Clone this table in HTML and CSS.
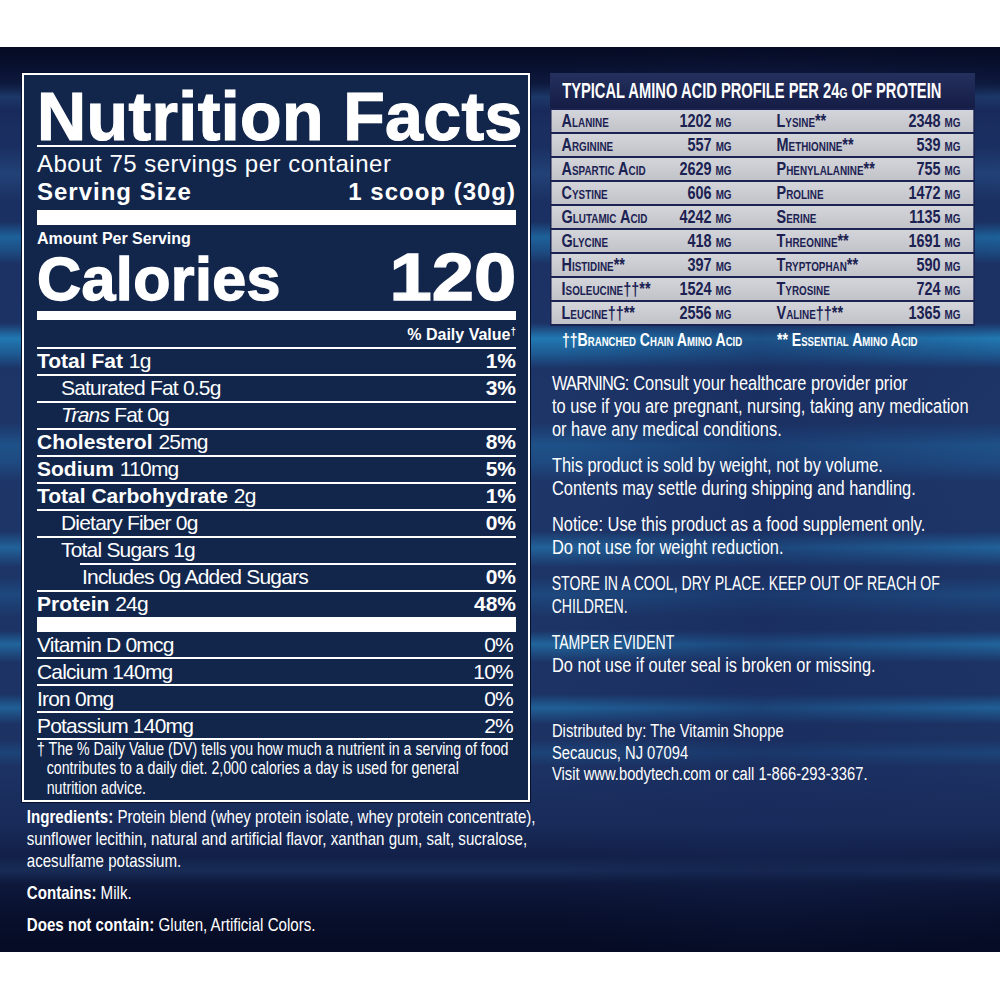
FILE: index.html
```html
<!DOCTYPE html>
<html lang="en">
<head>
<meta charset="utf-8">
<title>Nutrition Facts</title>
<link rel="stylesheet" href="styles.css">
</head>
<body>
<div class="panel">
  <div class="left">
    <div class="nf">
      <h1 class="nf-title">Nutrition Facts</h1>
      <div class="servings">About 75 servings per container</div>
      <div class="serving-size"><span>Serving Size</span><span>1 scoop (30g)</span></div>
      <div class="bar-thick"></div>
      <div class="amount">Amount Per Serving</div>
      <div class="calories"><span class="cal-label">Calories</span><span class="cal-num">120</span></div>
      <div class="bar-med"></div>
      <div class="dv-head">% Daily Value<span class="dag">†</span></div>
      <div class="row"><span><b>Total Fat</b> <span class="reg">1g</span></span><b>1%</b></div>
      <div class="row ind1"><span class="reg">Saturated Fat 0.5g</span><b>3%</b></div>
      <div class="row ind1"><span class="reg"><i>Trans</i> Fat 0g</span></div>
      <div class="row"><span><b>Cholesterol</b> <span class="reg">25mg</span></span><b>8%</b></div>
      <div class="row"><span><b>Sodium</b> <span class="reg">110mg</span></span><b>5%</b></div>
      <div class="row"><span><b>Total Carbohydrate</b> <span class="reg">2g</span></span><b>1%</b></div>
      <div class="row ind1"><span class="reg">Dietary Fiber 0g</span><b>0%</b></div>
      <div class="row ind1"><span class="reg">Total Sugars 1g</span></div>
      <div class="row ind2"><span class="reg">Includes 0g Added Sugars</span><b>0%</b></div>
      <div class="row"><span><b>Protein</b> <span class="reg">24g</span></span><b>48%</b></div>
      <div class="bar-thick"></div>
      <div class="vit">
        <div class="vrow"><span>Vitamin D 0mcg</span><span>0%</span></div>
        <div class="vrow"><span>Calcium 140mg</span><span>10%</span></div>
        <div class="vrow"><span>Iron 0mg</span><span>0%</span></div>
        <div class="vrow"><span>Potassium 140mg</span><span>2%</span></div>
      </div>
      <p class="foot sq">† The % Daily Value (DV) tells you how much a nutrient in a serving of food<br>contributes to a daily diet. 2,000 calories a day is used for general<br>nutrition advice.</p>
    </div>
    <div class="ingredients sq">
      <p><b>Ingredients:</b> Protein blend (whey protein isolate, whey protein concentrate),<br>sunflower lecithin, natural and artificial flavor, xanthan gum, salt, sucralose,<br>acesulfame potassium.</p>
      <p><b>Contains:</b> Milk.</p>
      <p><b>Does not contain:</b> Gluten, Artificial Colors.</p>
    </div>
  </div>

  <div class="right">
    <div class="amino sq">
      <div class="amino-head"><span class="head-text">TYPICAL AMINO ACID PROFILE PER 24<span class="sc">g</span> OF PROTEIN</span></div>
      <div class="amino-rows">
        <div class="arow"><span>Alanine</span><span class="v">1202 mg</span><span></span><span>Lysine**</span><span class="v">2348 mg</span></div>
        <div class="arow"><span>Arginine</span><span class="v">557 mg</span><span></span><span>Methionine**</span><span class="v">539 mg</span></div>
        <div class="arow"><span>Aspartic Acid</span><span class="v">2629 mg</span><span></span><span>Phenylalanine**</span><span class="v">755 mg</span></div>
        <div class="arow"><span>Cystine</span><span class="v">606 mg</span><span></span><span>Proline</span><span class="v">1472 mg</span></div>
        <div class="arow"><span>Glutamic Acid</span><span class="v">4242 mg</span><span></span><span>Serine</span><span class="v">1135 mg</span></div>
        <div class="arow"><span>Glycine</span><span class="v">418 mg</span><span></span><span>Threonine**</span><span class="v">1691 mg</span></div>
        <div class="arow"><span>Histidine**</span><span class="v">397 mg</span><span></span><span>Tryptophan**</span><span class="v">590 mg</span></div>
        <div class="arow"><span>Isoleucine††**</span><span class="v">1524 mg</span><span></span><span>Tyrosine</span><span class="v">724 mg</span></div>
        <div class="arow"><span>Leucine††**</span><span class="v">2556 mg</span><span></span><span>Valine††**</span><span class="v">1365 mg</span></div>
      </div>
    </div>
    <div class="legend sq"><span>††Branched Chain Amino Acid</span><span>** Essential Amino Acid</span></div>

    <div class="notes sq">
      <p><span class="warn">WARNING:</span> Consult your healthcare provider prior<br>to use if you are pregnant, nursing, taking any medication<br>or have any medical conditions.</p>
      <p>This product is sold by weight, not by volume.<br>Contents may settle during shipping and handling.</p>
      <p>Notice: Use this product as a food supplement only.<br>Do not use for weight reduction.</p>
      <p class="caps-p">STORE IN A COOL, DRY PLACE. KEEP OUT OF REACH OF<br>CHILDREN.</p>
      <p><span class="caps-line">TAMPER EVIDENT</span>Do not use if outer seal is broken or missing.</p>
    </div>
    <div class="dist sq">Distributed by: The Vitamin Shoppe<br>Secaucus, NJ 07094<br>Visit www.bodytech.com or call 1-866-293-3367.</div>
  </div>
</div>
</body>
</html>
```

FILE: styles.css
```css
html, body {
  margin: 0;
  background: #ffffff;
}

/* horizontal squeeze to emulate a condensed typeface */
.sq {
  transform: scaleX(var(--sx));
  transform-origin: 0 0;
  width: calc(100% / var(--sx));
  box-sizing: border-box;
}

.panel {
  margin-top: 47px;
  height: 905px;
  box-sizing: border-box;
  padding: 26px 0 0 22px;
  display: flex;
  gap: 20px;
  overflow: hidden;
  background:
    linear-gradient(to bottom, rgba(4, 9, 32, 0.9) 0%, rgba(4, 9, 32, 0) 7%, rgba(4, 9, 32, 0) 86%, rgba(4, 9, 32, 0.85) 100%),
    linear-gradient(to right, rgba(22, 38, 88, 0) 0%, rgba(22, 38, 88, 0) 56%, rgba(24, 42, 92, 0.5) 76%, rgba(24, 42, 92, 0.15) 93%, rgba(24, 42, 92, 0) 100%),
    linear-gradient(to bottom,
      transparent 4%, rgba(60, 120, 190, 0.35) 5.5%, transparent 7%,
      transparent 11%, rgba(50, 110, 170, 0.3) 14%, transparent 17%,
      transparent 19.3%, rgba(30, 130, 190, 0.6) 21%, rgba(30, 120, 180, 0.4) 22.5%, transparent 24%,
      transparent 30.5%, rgba(35, 150, 210, 0.7) 32.2%, rgba(30, 125, 185, 0.5) 34%, transparent 35.5%,
      transparent 41.5%, rgba(30, 115, 175, 0.45) 44%, rgba(30, 110, 170, 0.35) 46%, transparent 48%,
      transparent 53.5%, rgba(35, 135, 195, 0.55) 55.3%, transparent 57.5%,
      transparent 58.5%, rgba(30, 110, 170, 0.35) 60.5%, transparent 63%,
      transparent 64.5%, rgba(35, 140, 200, 0.55) 66%, transparent 68%,
      transparent 71.5%, rgba(35, 140, 200, 0.5) 73%, transparent 74.8%,
      transparent 76.5%, rgba(30, 110, 170, 0.3) 78%, transparent 79.5%,
      transparent 89.5%, rgba(60, 110, 170, 0.3) 91%, transparent 92.5%),
    linear-gradient(to bottom, #0e1a44 0%, #1a2e60 9%, #1e3669 45%, #1c3263 80%, #14234f 92%, #0b1538 100%);
}

/* ---------- Nutrition facts box ---------- */
.left {
  width: 508px;
  flex: none;
}

.nf {
  border: 2px solid #ffffff;
  box-shadow: 0 0 0 1px #06102c;
  background: #12264c;
  padding: 0 12px 0 13px;
  color: #ffffff;
  font-family: "Liberation Sans", Arial, sans-serif;
}

.nf-title {
  margin: 12px 0 0;
  font-size: 68px;
  font-weight: 700;
  line-height: 58px;
  letter-spacing: 0.4px;
  -webkit-text-stroke: 1.2px #ffffff;
  white-space: nowrap;
  border-bottom: 2px solid #ffffff;
}

.servings {
  padding-top: 4px;
  font-size: 24px;
  line-height: 26px;
  letter-spacing: 0.5px;
}

.serving-size {
  display: flex;
  justify-content: space-between;
  margin-bottom: 3px;
  font-size: 24px;
  line-height: 30px;
  font-weight: 700;
  letter-spacing: 1px;
}

.bar-thick {
  height: 15px;
  background: #ffffff;
}

.amount {
  font-size: 16px;
  font-weight: 700;
  line-height: 27px;
}

.calories {
  display: flex;
  justify-content: space-between;
  align-items: baseline;
  height: 50px;
  line-height: 50px;
  margin-bottom: 9px;
  font-weight: 700;
  -webkit-text-stroke: 1.4px #ffffff;
}

.cal-label {
  font-size: 61px;
  letter-spacing: 0.4px;
}

.cal-num {
  display: inline-block;
  font-size: 66px;
  transform: scaleX(1.15);
  transform-origin: 100% 50%;
}

.bar-med {
  height: 9px;
  background: #ffffff;
}

.dv-head {
  text-align: right;
  font-size: 16px;
  font-weight: 700;
  line-height: 24px;
}

.dag {
  font-size: 10px;
  vertical-align: 5px;
}

.row {
  display: flex;
  justify-content: space-between;
  border-top: 2px solid #ffffff;
  padding-bottom: 2px;
  font-size: 21px;
  line-height: 23px;
  white-space: nowrap;
}

.reg {
  letter-spacing: -0.8px;
}

.ind1 > span:first-child {
  padding-left: 24px;
}

.ind2 {
  margin-left: 43px;
  padding-left: 2px;
}

.vit {
  margin-right: -4px;
  padding-right: 7px;
}

.vrow {
  display: flex;
  justify-content: space-between;
  font-size: 21px;
  line-height: 25px;
  letter-spacing: -0.8px;
  border-bottom: 2px solid #ffffff;
}

.foot {
  --sx: 0.81;
  margin: 0;
  padding: 0 0 2px 12px;
  text-indent: -12px;
  font-size: 17.5px;
  line-height: 19.4px;
  white-space: nowrap;
}

/* ---------- ingredients ---------- */
.ingredients {
  --sx: 0.795;
  padding: 4px 0 0 6px;
  color: #ffffff;
  font-family: "Liberation Sans", Arial, sans-serif;
  font-size: 19px;
  line-height: 22px;
  white-space: nowrap;
}

.ingredients p {
  margin: 0 0 10px;
}

/* ---------- right column ---------- */
.right {
  width: 425px;
  flex: none;
  display: flex;
  flex-direction: column;
  color: #ffffff;
  font-family: "Liberation Sans", Arial, sans-serif;
}

.amino {
  --sx: 0.76;
  background: #1a2351;
}

.amino-head {
  padding: 2px 0 0 15.8px;
  height: 33px;
  line-height: 33px;
  font-size: 21.5px;
  font-weight: 700;
  background: linear-gradient(to bottom, #25305f, #151d45);
  white-space: nowrap;
}

.head-text {
  display: inline-block;
  transform: scaleX(0.9);
  transform-origin: 0 50%;
}

.sc {
  font-variant: small-caps;
}

.amino-rows {
  display: flex;
  flex-direction: column;
  gap: 2px;
  padding: 2px;
  background: #1a2351;
}

.arow {
  display: grid;
  grid-template-columns: 131.6px 92.1px 59.2px 157.9px 84.2px;
  height: 22px;
  padding: 0 15.8px 0 13.2px;
  line-height: 22px;
  font-size: 19px;
  font-weight: 700;
  font-variant: small-caps;
  color: #1b2252;
  background: linear-gradient(to bottom, #d4d5da, #c2c3c9);
  white-space: nowrap;
}

.arow .v {
  text-align: right;
}

.legend {
  --sx: 0.74;
  display: flex;
  margin-top: 4px;
  padding-left: 16.2px;
  font-size: 19px;
  line-height: 20px;
  font-weight: 700;
  font-variant: small-caps;
  white-space: nowrap;
}

.legend span:first-child {
  width: 290.5px;
}

.notes {
  --sx: 0.82;
  margin-top: 22px;
  padding-left: 2.4px;
  font-size: 20px;
  line-height: 23px;
  white-space: nowrap;
}

.notes p {
  margin: 0 0 13px;
}

.warn {
  letter-spacing: -1px;
}

.caps-p,
.caps-line {
  transform: scaleX(0.86);
  transform-origin: 0 0;
}

.caps-line {
  display: block;
}

.dist {
  --sx: 0.82;
  margin-top: 31px;
  padding-left: 2.4px;
  font-size: 18px;
  line-height: 21.5px;
  white-space: nowrap;
}
```
